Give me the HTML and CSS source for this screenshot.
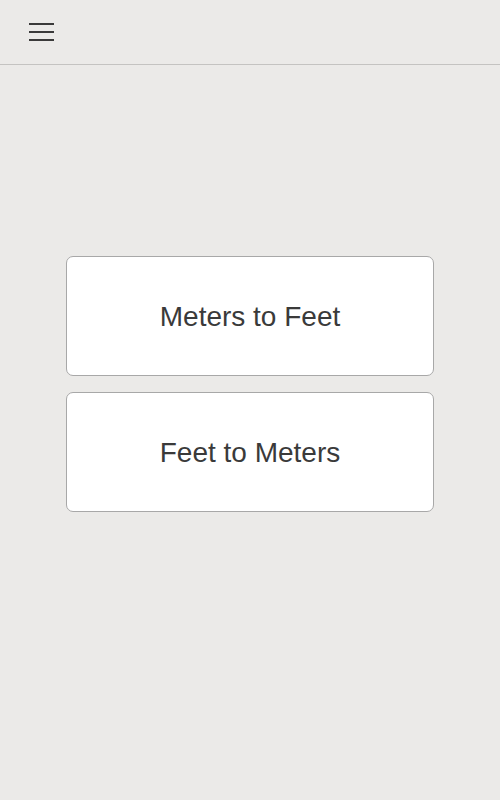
FILE: index.html
```html
<!DOCTYPE html>
<html>
<head>
    <title>Converter</title>
    <link rel="stylesheet" href="styles.css">
</head>
<body>
    <header class="top-bar">
        <button class="menu-button" aria-label="Menu">
            <span></span>
            <span></span>
            <span></span>
        </button>
    </header>

    <main class="choices">
        <button class="choice">Meters to Feet</button>
        <button class="choice">Feet to Meters</button>
    </main>
</body>
</html>
```

FILE: styles.css
```css
body {
    margin: 0;
    background-color: #ebeae8;
    font-family: "Liberation Sans", Arial, sans-serif;
    color: #3a3a3a;
}
.top-bar {
    height: 64px;
    border-bottom: 1px solid #c4c3c1;
    display: flex;
    align-items: center;
    padding-left: 29px;
}
.menu-button {
    background: none;
    border: none;
    padding: 0;
    margin-top: -1px;
    display: flex;
    flex-direction: column;
    gap: 6px;
    cursor: pointer;
}
.menu-button span {
    display: block;
    width: 25px;
    height: 2px;
    background-color: #3a3a3a;
}
.choices {
    display: flex;
    flex-direction: column;
    align-items: center;
    gap: 16px;
    padding-top: 191px;
}
.choice {
    width: 368px;
    height: 120px;
    padding-top: 3px;
    background-color: #fff;
    border: 1px solid #a8a8a8;
    border-radius: 7px;
    font-family: "Liberation Sans", Arial, sans-serif;
    font-size: 28px;
    color: #3a3a3a;
    cursor: pointer;
}
```
